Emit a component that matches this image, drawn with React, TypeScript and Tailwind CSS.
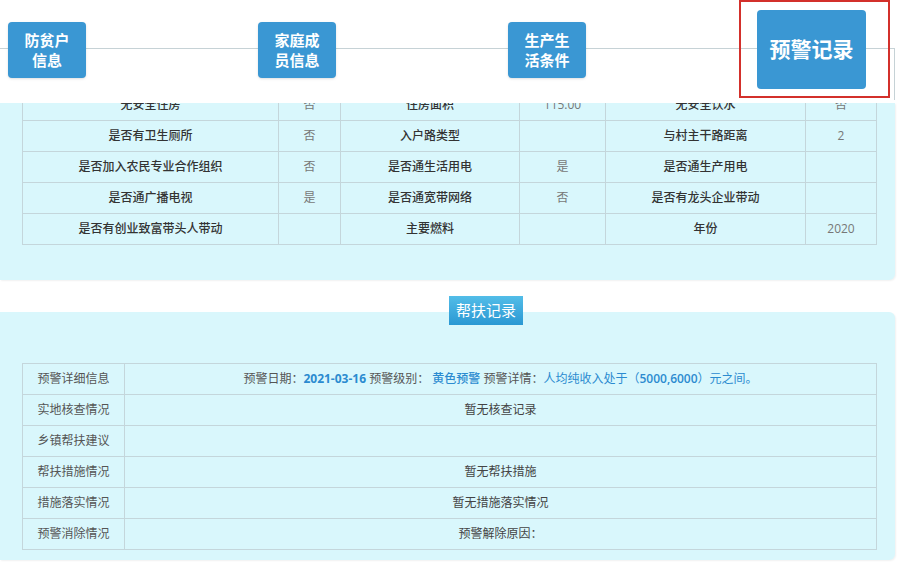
import React from "react";

const topRows: string[][] = [
  ["无安全住房", "否", "住房面积", "115.00", "无安全饮水", "否"],
  ["是否有卫生厕所", "否", "入户路类型", "", "与村主干路距离", "2"],
  ["是否加入农民专业合作组织", "否", "是否通生活用电", "是", "是否通生产用电", ""],
  ["是否通广播电视", "是", "是否通宽带网络", "否", "是否有龙头企业带动", ""],
  ["是否有创业致富带头人带动", "", "主要燃料", "", "年份", "2020"],
];

const topCols = [256, 62, 179, 86, 200, 71];

function NavButton({ lines }: { lines: string[] }) {
  return (
    <div className="w-[78px] h-[56px] mt-[22px] rounded-[4px] bg-[#3a97d3] flex flex-col items-center justify-center text-white font-bold text-[15px] leading-[20px] shadow-sm">
      {lines.map((l) => (
        <span key={l}>{l}</span>
      ))}
    </div>
  );
}

export default function App() {
  return (
    <div className="w-[900px] h-[563px] overflow-hidden bg-white font-['Open_Sans','Noto_Sans_CJK_SC',sans-serif]">
      <div className="relative h-[103px] bg-white">
        <div className="absolute left-0 top-[48px] w-[895px] h-[52px] border-t border-r border-[#c6d2d6]" />
        <div className="relative flex items-start pl-[8px]">
          <NavButton lines={["防贫户", "信息"]} />
          <div className="w-[172px]" />
          <NavButton lines={["家庭成", "员信息"]} />
          <div className="w-[172px]" />
          <NavButton lines={["生产生", "活条件"]} />
          <div className="w-[153px]" />
          <div className="w-[151px] h-[98px] border-2 border-[#d3302b] pl-[16px] pt-[8px]">
            <div className="w-[109px] h-[79px] rounded-[4px] bg-[#3a97d3] flex items-center justify-center text-white font-bold text-[21px]">
              预警记录
            </div>
          </div>
        </div>
      </div>

      {/* living conditions panel (scrolled under header) */}
      <div className="w-[895px] h-[177px] overflow-hidden bg-[#d9f7fc] rounded-br-md px-[22px] shadow-[1px_1px_2px_rgba(0,0,0,0.06)]">
        <table className="-mt-[14px] w-[854px] table-fixed border-collapse text-[12px] text-center">
          <colgroup>
            {topCols.map((w, i) => (
              <col key={i} style={{ width: w }} />
            ))}
          </colgroup>
          <tbody>
            {topRows.map((r, ri) => (
              <tr key={ri} className="h-[31px]">
                {r.map((c, ci) => (
                  <td
                    key={ci}
                    className={
                      "border border-[#c4d6db] p-0 " +
                      (ci % 2 === 0 ? "text-[#333] font-medium" : "text-[#777]")
                    }
                  >
                    {c}
                  </td>
                ))}
              </tr>
            ))}
          </tbody>
        </table>
      </div>

      {/* help record */}
      <div className="mt-[16px]">
        <div className="relative z-10 ml-[449px] w-[74px] h-[29px] bg-gradient-to-b from-[#52bde8] to-[#2a98d3] text-white text-[15px] flex items-center justify-center">
          帮扶记录
        </div>
        <div className="-mt-[13px] w-[895px] h-[248px] bg-[#d9f7fc] rounded-r-md pt-[51px] px-[22px] shadow-[1px_1px_2px_rgba(0,0,0,0.06)]">
          <table className="w-[854px] table-fixed border-collapse text-[12px] text-center">
            <colgroup>
              <col style={{ width: 102 }} />
              <col style={{ width: 752 }} />
            </colgroup>
            <tbody>
              <tr className="h-[31px]">
                <td className="border border-[#c4d6db] text-[#555]">预警详细信息</td>
                <td className="border border-[#c4d6db] text-[#555]">
                  预警日期：<span className="font-bold text-[#2b8bd0]">2021-03-16</span> 预警级别：{" "}
                  <span className="text-[#2b8bd0] font-medium">黄色预警</span> 预警详情：
                  <span className="text-[#2b8bd0]">人均纯收入处于（<span className="font-semibold">5000,6000</span>）元之间。</span>
                </td>
              </tr>
              <tr className="h-[31px]">
                <td className="border border-[#c4d6db] text-[#555]">实地核查情况</td>
                <td className="border border-[#c4d6db] text-[#444]">暂无核查记录</td>
              </tr>
              <tr className="h-[31px]">
                <td className="border border-[#c4d6db] text-[#555]">乡镇帮扶建议</td>
                <td className="border border-[#c4d6db] text-[#444]"></td>
              </tr>
              <tr className="h-[31px]">
                <td className="border border-[#c4d6db] text-[#555]">帮扶措施情况</td>
                <td className="border border-[#c4d6db] text-[#444]">暂无帮扶措施</td>
              </tr>
              <tr className="h-[31px]">
                <td className="border border-[#c4d6db] text-[#555]">措施落实情况</td>
                <td className="border border-[#c4d6db] text-[#444]">暂无措施落实情况</td>
              </tr>
              <tr className="h-[31px]">
                <td className="border border-[#c4d6db] text-[#555]">预警消除情况</td>
                <td className="border border-[#c4d6db] text-[#444]">预警解除原因：</td>
              </tr>
            </tbody>
          </table>
        </div>
      </div>
    </div>
  );
}
